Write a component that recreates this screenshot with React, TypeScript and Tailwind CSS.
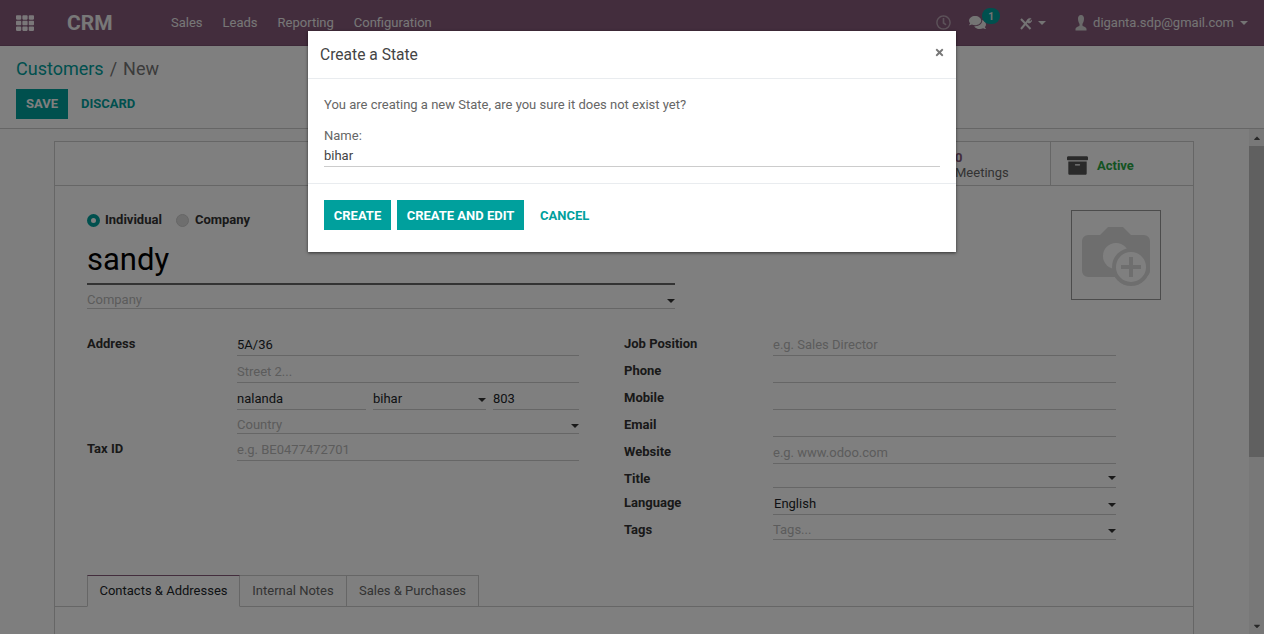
import { FaTh, FaRegClock, FaComments, FaArchive, FaCaretDown, FaCaretUp, FaTimes } from "react-icons/fa";

const font = { fontFamily: "Roboto, sans-serif" };

function Caret({ className = "" }: { className?: string }) {
  return <span className={`w-0 h-0 border-x-[4px] border-x-transparent border-t-[4px] ${className}`} />;
}

function Field({ value, placeholder, h, caret, pb = "pb-[2px]", className = "" }: { value?: string; placeholder?: string; h: string; caret?: boolean; pb?: string; className?: string }) {
  return (
    <div className={`flex items-end justify-between border-b border-[#ccc] leading-[16px] ${h} ${pb} ${className}`}>
      <span className={value ? "text-[#212529]" : "text-[#b8b8b8]"}>{value ?? placeholder}</span>
      {caret && <Caret className="border-t-[#333] mb-[5px]" />}
    </div>
  );
}

function Label({ children, h }: { children: string; h: string }) {
  return <div className={`font-bold text-[#333] ${h}`}>{children}</div>;
}

function Navbar() {
  return (
    <div className="h-[46px] bg-[#875a7b] flex items-center text-white shrink-0 border-b border-[#7a5170]">
      <FaTh className="ml-[16px] w-[18px] h-[18px] text-[#f4eef2]" />
      <div className="ml-[33px] mt-[2px] text-[21px] font-bold w-[104px] text-[#f0f0f0]">CRM</div>
      <div className="flex gap-[20px] text-[13px] text-[#eee]">
        <span>Sales</span>
        <span>Leads</span>
        <span>Reporting</span>
        <span>Configuration</span>
      </div>
      <div className="ml-auto flex items-center text-[#e8e8e8]">
        <FaRegClock className="w-[15px] h-[15px] text-[#b9a5b3]" />
        <div className="relative ml-[18px]">
          <FaComments className="w-[17px] h-[17px]" />
          <span className="absolute -top-[6px] left-[13px] w-[18px] h-[16px] rounded-full bg-[#00a09d] text-[10px] font-bold flex items-center justify-center">1</span>
        </div>
        <svg className="ml-[33px] w-[13px] h-[13px] mt-[2px]" viewBox="0 0 13 13" fill="none" stroke="currentColor">
          <path d="M2 12 L9.5 3" strokeWidth="2" />
          <path d="M2 2 L11.5 12" strokeWidth="2" />
          <path d="M8 4 A3 3 0 0 1 12 1.5 L10.2 3.5 L11 4.5 L12.8 3 A3 3 0 0 1 9 6" fill="currentColor" strokeWidth="0.5" />
        </svg>
        <Caret className="ml-[6px] border-t-[#e8e8e8]" />
        <svg className="ml-[29px] w-[12px] h-[16px]" viewBox="0 0 12 16" fill="#d5d5d5">
          <path d="M6 0 C3.8 0 3 1.8 3 3.8 C3 6 3.8 8 4.6 9 L4.4 11 C2.5 11.8 0.5 12.5 0.5 14 V15.5 H11.5 V14 C11.5 12.5 9.5 11.8 7.6 11 L7.4 9 C8.2 8 9 6 9 3.8 C9 1.8 8.2 0 6 0 Z" />
        </svg>
        <span className="ml-[6px] text-[13px]">diganta.sdp@gmail.com</span>
        <Caret className="ml-[6px] mr-[16px] border-t-[#e8e8e8]" />
      </div>
    </div>
  );
}

function ControlPanel() {
  return (
    <div className="h-[83px] bg-white border-b border-[#ccc] px-[16px] pt-[10px] shrink-0">
      <div className="text-[18px] leading-[26px] text-[#777]">
        <span className="text-[#00a09d]">Customers</span>
        <span className="mx-[6px]">/</span>
        <span>New</span>
      </div>
      <div className="flex items-center mt-[7px] text-[13px] font-bold">
        <span className="w-[52px] h-[30px] bg-[#00a09d] text-white flex items-center justify-center">SAVE</span>
        <span className="ml-[13px] text-[#00a09d]">DISCARD</span>
      </div>
    </div>
  );
}

function Sheet() {
  return (
    <div className="ml-[54px] mr-[55px] mt-[12px] bg-white border border-[#ccc] text-[13px] h-[600px]">
      <div className="h-[44px] border-b border-[#ccc] flex justify-end">
        <div className="w-[142px] border-r border-[#ccc] pl-[46px] pt-[8px] leading-[15px] text-[#666]">
          <div className="font-bold text-[#875a7b]">0</div>
          <div>Meetings</div>
        </div>
        <div className="w-[142px] flex items-center pl-[16px] pt-[4px]">
          <FaArchive className="w-[21px] h-[21px] text-[#555]" />
          <span className="ml-[9px] font-bold text-[#28a745]">Active</span>
        </div>
      </div>

      <div className="flex justify-between pl-[32px] pr-[32px] pt-[24px]">
        <div className="w-[588px]">
          <div className="flex items-center h-[20px] font-bold text-[#333]">
            <span className="w-[13px] h-[13px] rounded-full border-[4px] border-[#00a09d] bg-white" />
            <span className="ml-[5px]">Individual</span>
            <span className="ml-[14px] w-[13px] h-[13px] rounded-full bg-[#ddd] border border-[#ccc]" />
            <span className="ml-[6px]">Company</span>
          </div>
          <div className="mt-[9px] h-[46px] border-b-2 border-[#666] text-[31px] leading-[42px] text-black">sandy</div>
          <Field placeholder="Company" h="h-[24px]" pb="pb-0" caret />
        </div>
        <div className="w-[90px] h-[90px] border border-[#999] flex items-center justify-center">
          <svg className="w-[70px] h-[62px]" viewBox="0 0 70 62">
            <path d="M7 11 H19 L27 3 H42 L50 11 H63 A6 6 0 0 1 69 17 V47 A6 6 0 0 1 63 53 H7 A6 6 0 0 1 1 47 V17 A6 6 0 0 1 7 11 Z" fill="#ddd" />
            <circle cx="35" cy="32" r="13" fill="#fff" />
            <circle cx="50" cy="43" r="17" fill="#fff" stroke="#ddd" strokeWidth="4" />
            <path d="M50 33 V53 M40 43 H60" stroke="#ddd" strokeWidth="4" />
          </svg>
        </div>
      </div>

      <div className="flex pl-[32px] mt-[22px]">
        <div className="w-[150px] pt-[3px] shrink-0">
          <Label h="h-[105px]">Address</Label>
          <Label h="h-[20px]">Tax ID</Label>
        </div>
        <div className="w-[342px] shrink-0 -mt-[1px]">
          <Field value="5A/36" h="h-[26px]" />
          <Field placeholder="Street 2..." h="h-[27px]" />
          <div className="flex gap-[7px]">
            <Field value="nalanda" h="h-[27px]" className="w-[129px]" />
            <Field value="bihar" h="h-[27px]" caret className="w-[113px]" />
            <Field value="803" h="h-[27px]" className="flex-1" />
          </div>
          <Field placeholder="Country" h="h-[24px]" pb="pb-0" caret />
          <Field placeholder="e.g. BE0477472701" h="h-[27px]" />
        </div>
        <div className="w-[149px] ml-[45px] pt-[3px] shrink-0">
          <Label h="h-[27px]">Job Position</Label>
          <Label h="h-[27px]">Phone</Label>
          <Label h="h-[27px]">Mobile</Label>
          <Label h="h-[27px]">Email</Label>
          <Label h="h-[27px]">Website</Label>
          <Label h="h-[24px]">Title</Label>
          <Label h="h-[27px]">Language</Label>
          <Label h="h-[20px]">Tags</Label>
        </div>
        <div className="w-[343px] shrink-0 -mt-[1px]">
          <Field placeholder="e.g. Sales Director" h="h-[26px]" />
          <Field h="h-[27px]" />
          <Field h="h-[27px]" />
          <Field h="h-[27px]" />
          <Field placeholder="e.g. www.odoo.com" h="h-[27px]" />
          <Field h="h-[24px]" caret />
          <Field value="English" h="h-[27px]" caret className="pl-[1px]" />
          <Field placeholder="Tags..." h="h-[25px]" pb="pb-[1px]" caret />
        </div>
      </div>

      <div className="mt-[35px] h-[32px] border-b border-[#ccc] pl-[32px] flex">
        <div className="h-[32px] w-[153px] border border-[#ccc] border-b-white border-t-[#875a7b] bg-white flex items-center justify-center text-[#212529]">Contacts &amp; Addresses</div>
        <div className="h-[32px] w-[107px] border border-l-0 border-[#ccc] flex items-center justify-center text-[#666]">Internal Notes</div>
        <div className="h-[32px] w-[132px] border border-l-0 border-[#ccc] flex items-center justify-center text-[#666]">Sales &amp; Purchases</div>
      </div>
    </div>
  );
}

function Scrollbar() {
  return (
    <div className="w-[15px] bg-[#f1f1f1] flex flex-col items-center shrink-0 h-full">
      <FaCaretUp className="w-[10px] h-[10px] text-[#505050] mt-[4px]" />
      <div className="w-[15px] h-[311px] mt-[3px] bg-[#c1c1c1]" />
      <FaCaretDown className="w-[10px] h-[10px] text-[#505050] mt-auto mb-[3px]" />
    </div>
  );
}

function Modal() {
  return (
    <div className="absolute left-[308px] top-[31px] w-[648px] h-[221px] bg-white shadow-[0_1px_3px_rgba(0,0,0,0.6)] text-[13px] text-[#666]">
      <div className="h-[48px] border-b border-[#e9ecef] flex items-center justify-between pl-[12px] pr-[11px]">
        <span className="text-[15.6px] text-[#444] mt-[2px]">Create a State</span>
        <FaTimes className="w-[11px] h-[11px] text-[#777] -mt-[4px]" />
      </div>
      <div className="h-[105px] border-b border-[#e9ecef] px-[16px] pt-[18px] leading-[16px]">
        <div>You are creating a new State, are you sure it does not exist yet?</div>
        <div className="mt-[15px]">Name:</div>
        <div className="mt-[3px] h-[20px] border-b border-[#ccc] text-[#444] leading-[17px]">bihar</div>
      </div>
      <div className="flex items-center pl-[16px] pt-[16px] text-[13px] font-bold">
        <span className="h-[30px] w-[67px] bg-[#00a09d] text-white flex items-center justify-center pt-[1px]">CREATE</span>
        <span className="ml-[6px] h-[30px] w-[127px] bg-[#00a09d] text-white flex items-center justify-center pt-[1px]">CREATE AND EDIT</span>
        <span className="ml-[16px] text-[#00a09d] pt-[1px]">CANCEL</span>
      </div>
    </div>
  );
}

export default function App() {
  return (
    <div style={font} className="relative w-[1264px] h-[634px] overflow-hidden flex flex-col bg-white text-[#4c4c4c]">
      <Navbar />
      <ControlPanel />
      <div className="flex flex-1 min-h-0 bg-[#fdfdfd]">
        <div className="flex-1 min-w-0 overflow-hidden">
          <Sheet />
        </div>
        <Scrollbar />
      </div>
      <div className="absolute inset-0 bg-black/50" />
      <Modal />
    </div>
  );
}
